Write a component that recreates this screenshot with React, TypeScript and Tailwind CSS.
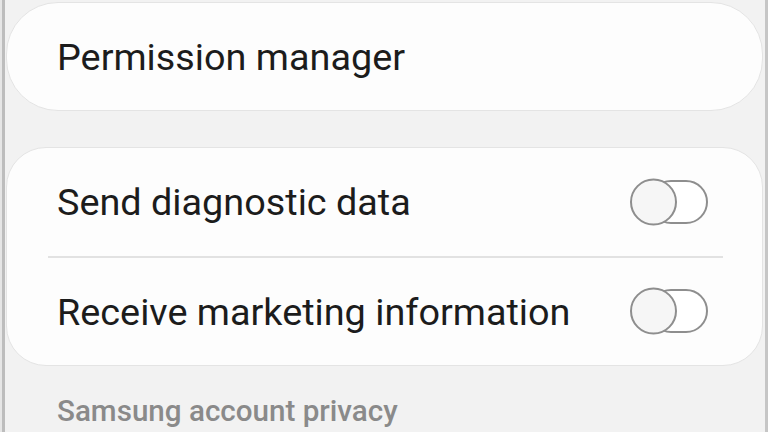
import React from "react";

function Toggle() {
  return (
    <svg width="82" height="50" viewBox="0 0 82 50" className="shrink-0">
      <rect x="22" y="4" width="57" height="42" rx="21" fill="#ffffff" stroke="#8e8e8e" strokeWidth="2" />
      <circle cx="25.5" cy="25" r="22.5" fill="#f6f6f6" stroke="#8e8e8e" strokeWidth="2" />
    </svg>
  );
}

export default function App() {
  const font = { fontFamily: "Roboto, 'Noto Sans', sans-serif" };
  return (
    <div className="w-[768px] h-[432px] overflow-hidden bg-[#f2f2f2] flex" style={font}>
      <div className="w-[2px] h-full bg-[#e6e6e6]" />
      <div className="w-[3px] h-full bg-[#bdbdbd]" />
      <div className="flex-1 flex flex-col pl-px pr-[2px] pt-[2px]">
        <div className="h-[109px] rounded-[52px] bg-[#fdfdfd] border border-[#e4e4e4] flex items-center pl-[50px] pt-[3px]">
          <span className="text-[37.8px] text-[#1c1c1c] leading-none">Permission manager</span>
        </div>
        <div className="mt-[36px] h-[219px] rounded-[40px] bg-[#fdfdfd] border border-[#e4e4e4] flex flex-col">
          <div className="flex-1 flex items-center justify-between pl-[50px] pr-[52px]">
            <span className="text-[37.8px] text-[#1c1c1c] leading-none pt-[2px]">Send diagnostic data</span>
            <Toggle />
          </div>
          <div className="h-[2px] bg-[#e2e2e2] ml-[41px] mr-[39px]" />
          <div className="flex-1 flex items-center justify-between pl-[50px] pr-[52px]">
            <span className="text-[37.8px] text-[#1c1c1c] leading-none pt-[4px]">Receive marketing information</span>
            <Toggle />
          </div>
        </div>
        <div className="pl-[51px] pt-[31px]">
          <span className="text-[29.6px] font-medium text-[#8a8a8a] leading-none">Samsung account privacy</span>
        </div>
      </div>
      <div className="w-[3px] h-full bg-[#c6c6c6]" />
    </div>
  );
}
